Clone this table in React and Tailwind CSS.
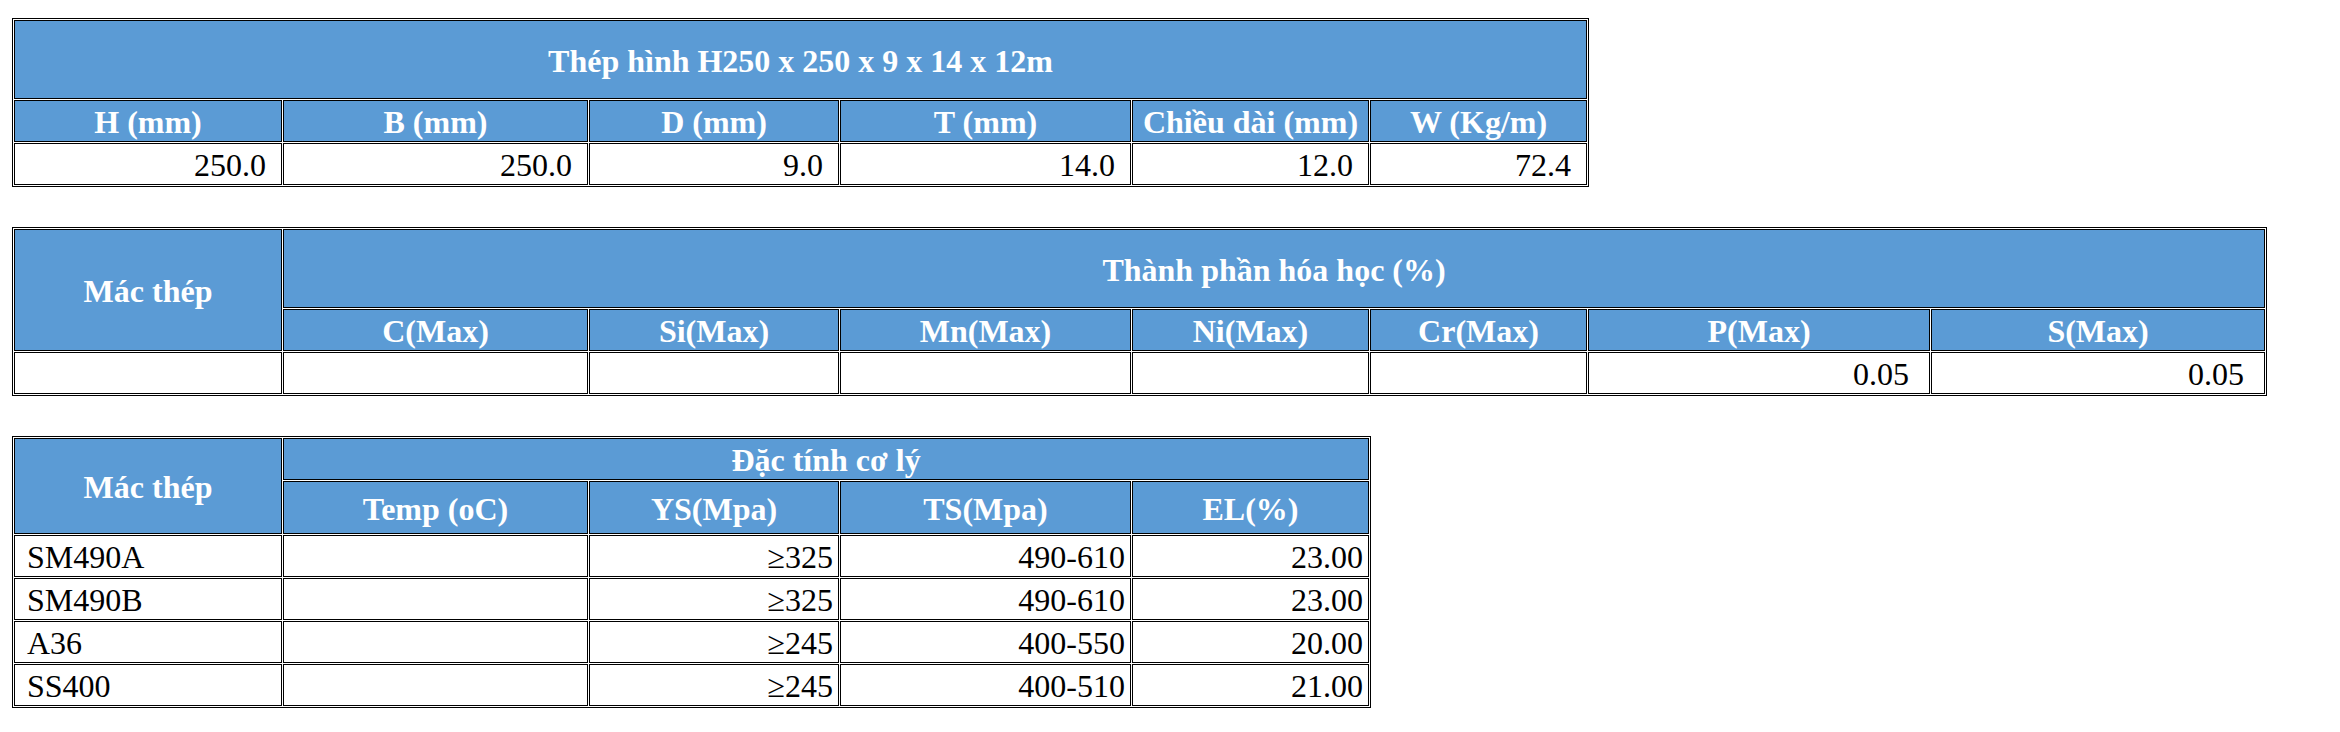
const serif = { fontFamily: '"Liberation Serif", "Times New Roman", serif' };

const cell = 'border border-black align-middle pt-[3px] pb-[1px] whitespace-nowrap text-[32px] leading-[36px]';
const th = `${cell} bg-[#5b9bd5] text-white font-bold text-center px-[1px]`;
const tdRight = `${cell} bg-white text-black font-normal text-right`;
const tdLeft = `${cell} bg-white text-black font-normal text-left pl-[12px]`;
const tableCls = 'table-fixed border-separate border-spacing-[1px] border border-black bg-white';

const dims = [
  { label: 'H (mm)', value: '250.0' },
  { label: 'B (mm)', value: '250.0' },
  { label: 'D (mm)', value: '9.0' },
  { label: 'T (mm)', value: '14.0' },
  { label: 'Chiều dài (mm)', value: '12.0' },
  { label: 'W (Kg/m)', value: '72.4' },
];

const chem = [
  { label: 'C(Max)', value: '' },
  { label: 'Si(Max)', value: '' },
  { label: 'Mn(Max)', value: '' },
  { label: 'Ni(Max)', value: '' },
  { label: 'Cr(Max)', value: '' },
  { label: 'P(Max)', value: '0.05' },
  { label: 'S(Max)', value: '0.05' },
];

const mech = [
  ['SM490A', '', '≥325', '490-610', '23.00'],
  ['SM490B', '', '≥325', '490-610', '23.00'],
  ['A36', '', '≥245', '400-550', '20.00'],
  ['SS400', '', '≥245', '400-510', '21.00'],
];

function Cols({ widths }) {
  return (
    <colgroup>
      {widths.map((w, i) => (
        <col key={i} style={{ width: w }} />
      ))}
    </colgroup>
  );
}

export default function App() {
  return (
    <div className="min-h-screen bg-white pt-[18px] pl-[12px]" style={serif}>
      {/* Kích thước */}
      <table className={`${tableCls} w-[1577px]`} style={serif}>
        <Cols widths={[268, 305, 250, 291, 237, 217]} />
        <tbody>
          <tr>
            <td colSpan={6} className={`${th} h-[79px]`}>
              Thép hình H250 x 250 x 9 x 14 x 12m
            </td>
          </tr>
          <tr>
            {dims.map((d) => (
              <td key={d.label} className={`${th} h-[42px]`}>
                {d.label}
              </td>
            ))}
          </tr>
          <tr>
            {dims.map((d) => (
              <td key={d.label} className={`${tdRight} h-[42px] pr-[15px]`}>
                {d.value}
              </td>
            ))}
          </tr>
        </tbody>
      </table>

      {/* Thành phần hóa học */}
      <table className={`${tableCls} w-[2255px] mt-[40px]`} style={serif}>
        <Cols widths={[268, 305, 250, 291, 237, 217, 342, 334]} />
        <tbody>
          <tr>
            <td rowSpan={2} className={th}>
              Mác thép
            </td>
            <td colSpan={7} className={`${th} h-[79px]`}>
              Thành phần hóa học (%)
            </td>
          </tr>
          <tr>
            {chem.map((c) => (
              <td key={c.label} className={`${th} h-[42px]`}>
                {c.label}
              </td>
            ))}
          </tr>
          <tr>
            <td className={`${tdRight} h-[42px]`}></td>
            {chem.map((c) => (
              <td key={c.label} className={`${tdRight} h-[42px] pr-[20px]`}>
                {c.value}
              </td>
            ))}
          </tr>
        </tbody>
      </table>

      {/* Đặc tính cơ lý */}
      <table className={`${tableCls} w-[1359px] mt-[40px]`} style={serif}>
        <Cols widths={[268, 305, 250, 291, 237]} />
        <tbody>
          <tr>
            <td rowSpan={2} className={th}>
              Mác thép
            </td>
            <td colSpan={4} className={`${th} h-[42px]`}>
              Đặc tính cơ lý
            </td>
          </tr>
          <tr>
            {['Temp (oC)', 'YS(Mpa)', 'TS(Mpa)', 'EL(%)'].map((h) => (
              <td key={h} className={`${th} h-[53px]`}>
                {h}
              </td>
            ))}
          </tr>
          {mech.map((row) => (
            <tr key={row[0]}>
              <td className={`${tdLeft} h-[42px]`}>{row[0]}</td>
              {row.slice(1).map((v, i) => (
                <td key={i} className={`${tdRight} h-[42px] pr-[5px]`}>
                  {v}
                </td>
              ))}
            </tr>
          ))}
        </tbody>
      </table>
    </div>
  );
}
